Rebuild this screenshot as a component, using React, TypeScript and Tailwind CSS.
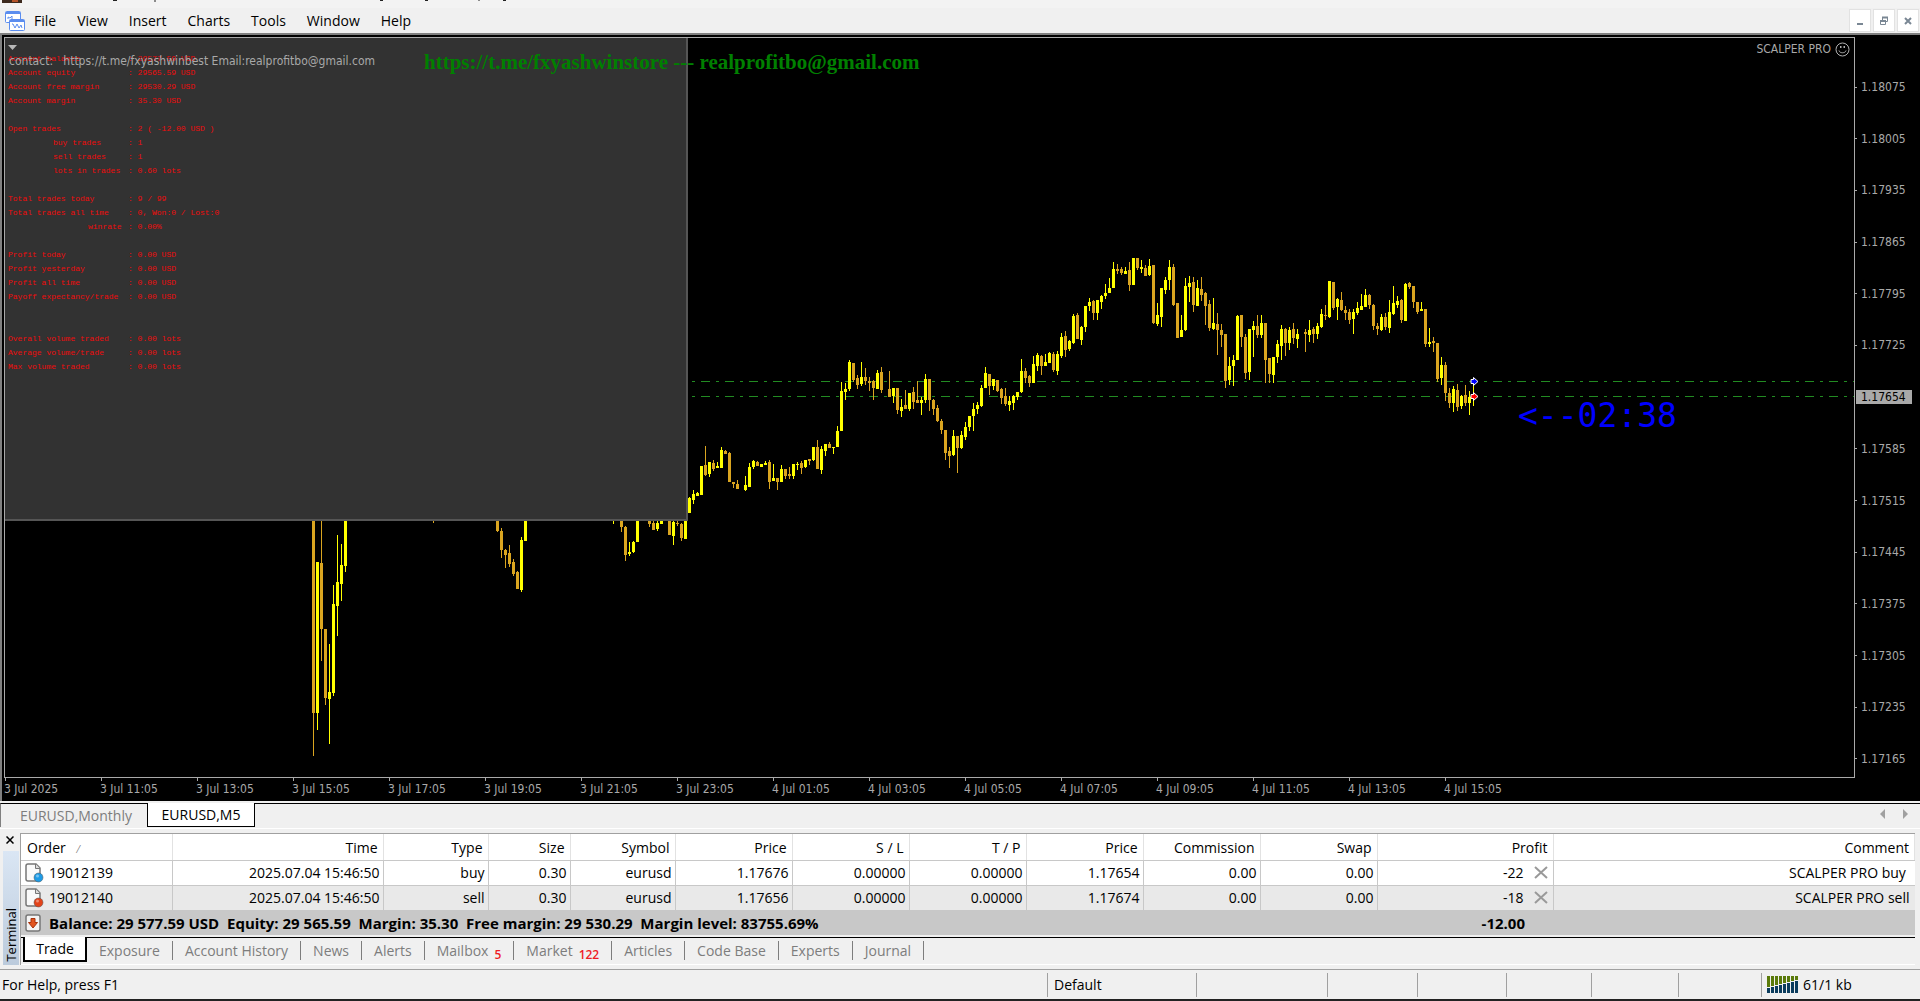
import type { ReactNode } from 'react';

// x, high, body top, body bottom, low, rising
type Candle = [number, number, number, number, number, number];

const candles: Candle[] = [
    [313, 500, 500, 713, 756, 0], [317, 562, 562, 713, 730, 1], [321, 500, 563, 629, 661, 0], [325, 629, 629, 698, 705, 0],
    [329, 644, 692, 699, 744, 1], [333, 585, 604, 693, 696, 1], [337, 535, 582, 606, 636, 1], [341, 544, 565, 584, 601, 1],
    [345, 500, 500, 566, 572, 1], [433, 500, 500, 501, 523, 0], [497, 500, 500, 531, 532, 0], [501, 528, 531, 550, 558, 0],
    [505, 549, 550, 555, 568, 0], [509, 545, 553, 564, 567, 0], [513, 559, 562, 574, 576, 0], [517, 571, 572, 589, 589, 0],
    [521, 537, 540, 590, 592, 1], [525, 500, 500, 541, 541, 1], [613, 500, 500, 501, 524, 1], [621, 500, 500, 527, 532, 0],
    [625, 526, 527, 555, 561, 0], [629, 542, 552, 554, 556, 1], [633, 541, 542, 552, 553, 1], [637, 500, 500, 542, 542, 1],
    [649, 500, 500, 524, 527, 0], [653, 520, 523, 530, 530, 0], [657, 520, 523, 529, 531, 1], [661, 500, 500, 524, 524, 1],
    [669, 500, 500, 535, 535, 0], [673, 521, 522, 536, 545, 1], [677, 520, 523, 524, 526, 0], [681, 523, 524, 538, 541, 0],
    [685, 500, 500, 539, 539, 1], [689, 497, 498, 513, 513, 1], [693, 490, 494, 500, 504, 1], [697, 492, 493, 496, 496, 1],
    [701, 466, 466, 495, 495, 1], [705, 446, 465, 475, 476, 0], [709, 462, 462, 474, 477, 1], [713, 460, 463, 469, 471, 0],
    [717, 462, 466, 468, 468, 1], [721, 447, 450, 468, 468, 1], [725, 450, 451, 454, 454, 0], [729, 452, 453, 482, 482, 0],
    [733, 482, 482, 484, 488, 0], [737, 480, 484, 489, 489, 0], [745, 476, 485, 490, 491, 1], [749, 463, 467, 487, 487, 1],
    [753, 460, 461, 467, 469, 1], [757, 461, 462, 466, 466, 0], [761, 464, 464, 467, 467, 1], [765, 461, 463, 465, 465, 1],
    [769, 460, 462, 482, 489, 0], [773, 464, 478, 481, 481, 1], [777, 478, 478, 482, 490, 0], [781, 465, 469, 482, 482, 1],
    [785, 469, 469, 476, 479, 0], [789, 467, 474, 476, 479, 0], [793, 464, 464, 476, 479, 1], [797, 462, 464, 465, 470, 1],
    [801, 461, 463, 468, 474, 0], [805, 460, 460, 467, 468, 1], [809, 459, 459, 461, 465, 0], [813, 447, 447, 460, 461, 1],
    [817, 440, 447, 469, 469, 0], [821, 446, 449, 470, 474, 1], [825, 444, 444, 451, 456, 1], [829, 442, 444, 448, 448, 0],
    [833, 447, 447, 448, 454, 1], [837, 426, 431, 447, 447, 1], [841, 382, 391, 431, 431, 1], [845, 383, 389, 392, 400, 1],
    [849, 360, 362, 389, 391, 1], [853, 363, 363, 380, 382, 0], [857, 375, 378, 385, 389, 0], [861, 362, 377, 384, 386, 1],
    [865, 368, 377, 381, 385, 0], [869, 377, 381, 383, 391, 0], [873, 380, 381, 388, 400, 0], [877, 370, 373, 389, 389, 1],
    [881, 367, 372, 390, 393, 0], [889, 371, 389, 397, 397, 0], [893, 388, 388, 396, 403, 1], [897, 388, 388, 410, 414, 0],
    [901, 399, 407, 411, 417, 1], [905, 390, 405, 409, 409, 0], [909, 393, 393, 409, 411, 1], [913, 387, 392, 402, 409, 0],
    [917, 381, 400, 403, 403, 0], [921, 397, 400, 403, 415, 1], [925, 374, 379, 400, 403, 1], [929, 379, 379, 400, 411, 0],
    [933, 399, 400, 409, 415, 0], [937, 405, 408, 421, 422, 0], [941, 419, 421, 430, 434, 0], [945, 430, 430, 453, 460, 0],
    [949, 447, 451, 456, 468, 0], [953, 430, 436, 455, 456, 1], [957, 436, 436, 448, 473, 0], [961, 431, 435, 448, 449, 1],
    [965, 422, 427, 437, 440, 1], [969, 416, 416, 427, 431, 1], [973, 403, 409, 416, 431, 1], [977, 402, 405, 409, 414, 1],
    [981, 385, 388, 406, 407, 1], [985, 367, 373, 388, 388, 1], [989, 374, 374, 386, 395, 0], [993, 379, 379, 386, 390, 1],
    [997, 380, 380, 391, 392, 0], [1001, 388, 389, 398, 404, 0], [1005, 388, 396, 404, 406, 0], [1009, 396, 401, 405, 411, 1],
    [1013, 395, 396, 403, 410, 1], [1017, 392, 392, 397, 400, 1], [1021, 359, 371, 392, 393, 1], [1025, 368, 371, 378, 383, 0],
    [1029, 375, 376, 383, 387, 0], [1033, 356, 364, 383, 383, 1], [1037, 353, 355, 366, 371, 1], [1041, 355, 356, 366, 375, 0],
    [1045, 354, 362, 366, 366, 1], [1049, 352, 353, 363, 363, 1], [1053, 352, 354, 370, 372, 0], [1057, 351, 354, 371, 375, 1],
    [1061, 333, 337, 356, 358, 1], [1065, 331, 336, 350, 357, 0], [1069, 340, 341, 349, 351, 1], [1073, 314, 316, 343, 344, 1],
    [1077, 313, 315, 339, 339, 0], [1081, 326, 327, 340, 345, 1], [1085, 306, 306, 327, 332, 1], [1089, 298, 302, 306, 311, 1],
    [1093, 300, 301, 313, 320, 0], [1097, 300, 300, 313, 320, 1], [1101, 295, 296, 302, 309, 1], [1105, 284, 293, 296, 299, 1],
    [1109, 278, 288, 293, 293, 1], [1113, 262, 269, 288, 288, 1], [1117, 264, 269, 271, 274, 0], [1121, 267, 269, 273, 275, 0],
    [1125, 267, 271, 274, 274, 1], [1129, 262, 270, 285, 291, 0], [1133, 258, 258, 285, 285, 1], [1137, 258, 258, 268, 270, 0],
    [1141, 260, 267, 269, 273, 1], [1145, 265, 268, 276, 276, 0], [1149, 259, 266, 275, 276, 1], [1153, 265, 265, 323, 324, 0],
    [1157, 303, 315, 324, 326, 1], [1161, 288, 288, 317, 327, 1], [1165, 277, 280, 290, 294, 1], [1169, 260, 267, 280, 290, 1],
    [1173, 264, 267, 305, 306, 0], [1177, 303, 303, 338, 338, 0], [1181, 315, 330, 337, 337, 1], [1185, 278, 286, 330, 331, 1],
    [1189, 276, 283, 287, 302, 1], [1193, 277, 282, 305, 312, 0], [1197, 280, 288, 306, 306, 1], [1201, 277, 289, 295, 301, 0],
    [1205, 292, 293, 306, 325, 0], [1209, 300, 304, 328, 331, 0], [1213, 298, 323, 329, 330, 1], [1217, 313, 324, 330, 355, 0],
    [1221, 324, 330, 335, 347, 0], [1225, 334, 334, 381, 388, 0], [1229, 357, 366, 380, 385, 1], [1233, 355, 360, 366, 386, 1],
    [1237, 315, 316, 360, 360, 1], [1241, 315, 315, 337, 347, 0], [1245, 334, 337, 373, 379, 0], [1249, 329, 329, 372, 380, 1],
    [1253, 321, 326, 330, 357, 1], [1257, 315, 326, 335, 338, 0], [1261, 315, 323, 335, 338, 1], [1265, 323, 323, 360, 383, 0],
    [1269, 358, 358, 374, 383, 0], [1273, 357, 357, 375, 383, 1], [1277, 340, 344, 357, 363, 1], [1281, 325, 329, 346, 360, 1],
    [1285, 328, 329, 343, 356, 0], [1289, 327, 330, 343, 350, 1], [1293, 323, 329, 338, 344, 0], [1297, 329, 334, 339, 348, 1],
    [1305, 329, 332, 334, 352, 0], [1309, 320, 330, 335, 342, 1], [1313, 327, 329, 334, 343, 0], [1317, 323, 326, 334, 339, 1],
    [1321, 309, 314, 327, 328, 1], [1325, 305, 315, 316, 320, 0], [1329, 281, 281, 317, 318, 1], [1333, 282, 282, 308, 310, 0],
    [1337, 298, 299, 307, 320, 1], [1341, 292, 300, 310, 311, 0], [1345, 306, 310, 313, 320, 0], [1349, 309, 312, 320, 324, 0],
    [1353, 309, 312, 319, 334, 1], [1357, 302, 308, 313, 315, 1], [1361, 294, 306, 310, 310, 1], [1365, 289, 295, 307, 307, 1],
    [1369, 294, 295, 305, 309, 0], [1373, 304, 305, 326, 330, 0], [1377, 323, 326, 329, 335, 0], [1381, 314, 317, 330, 331, 1],
    [1385, 313, 317, 327, 330, 0], [1389, 300, 312, 328, 333, 1], [1393, 286, 303, 314, 315, 1], [1397, 296, 301, 305, 308, 1],
    [1401, 299, 300, 320, 323, 0], [1405, 283, 284, 321, 321, 1], [1409, 282, 283, 287, 289, 0], [1413, 286, 286, 302, 308, 0],
    [1417, 302, 302, 312, 314, 0], [1421, 302, 309, 311, 311, 1], [1425, 309, 309, 344, 347, 0], [1429, 328, 342, 344, 347, 1],
    [1433, 337, 341, 343, 352, 0], [1437, 343, 343, 379, 382, 0], [1441, 357, 365, 378, 385, 1], [1445, 362, 365, 393, 401, 0],
    [1449, 388, 393, 403, 408, 0], [1453, 386, 389, 403, 412, 1], [1457, 384, 390, 407, 411, 0], [1461, 395, 396, 406, 409, 1],
    [1465, 385, 395, 403, 406, 0], [1469, 391, 397, 403, 415, 1], [1473, 382, 394, 397, 406, 1],
];

const menuItems = ['File', 'View', 'Insert', 'Charts', 'Tools', 'Window', 'Help'];

const prices = [
    '1.18075', '1.18005', '1.17935', '1.17865', '1.17795', '1.17725', '1.17654',
    '1.17585', '1.17515', '1.17445', '1.17375', '1.17305', '1.17235', '1.17165',
];

const times = [
    '3 Jul 2025', '3 Jul 11:05', '3 Jul 13:05', '3 Jul 15:05', '3 Jul 17:05', '3 Jul 19:05', '3 Jul 21:05', '3 Jul 23:05',
    '4 Jul 01:05', '4 Jul 03:05', '4 Jul 05:05', '4 Jul 07:05', '4 Jul 09:05', '4 Jul 11:05', '4 Jul 13:05', '4 Jul 15:05',
];

// label, value, label indent
const stats: [string, string, string][] = [
    ['Account balance', '29577.59 USD', ''],
    ['Account equity', '29565.59 USD', ''],
    ['Account free margin', '29530.29 USD', ''],
    ['Account margin', '35.30 USD', ''],
    ['', '', ''],
    ['Open trades', '2 ( -12.00 USD )', ''],
    ['buy trades', '1', 'pl-[45px]'],
    ['sell trades', '1', 'pl-[45px]'],
    ['lots in trades', '0.60 lots', 'pl-[45px]'],
    ['', '', ''],
    ['Total trades today', '9 / 99', ''],
    ['Total trades all time', '0, Won:0 / Lost:0', ''],
    ['winrate', '0.00%', 'pl-20'],
    ['', '', ''],
    ['Profit today', '0.00 USD', ''],
    ['Profit yesterday', '0.00 USD', ''],
    ['Profit all time', '0.00 USD', ''],
    ['Payoff expectancy/trade', '0.00 USD', ''],
    ['', '', ''],
    ['', '', ''],
    ['Overall volume traded', '0.00 lots', ''],
    ['Average volume/trade', '0.00 lots', ''],
    ['Max volume traded', '0.00 lots', ''],
];

const columns: [string, string][] = [
    ['Order', 'w-[151px]'], ['Time', 'w-[211px]'], ['Type', 'w-[105px]'], ['Size', 'w-[82px]'], ['Symbol', 'w-[105px]'],
    ['Price', 'w-[117px]'], ['S / L', 'w-[117px]'], ['T / P', 'w-[117px]'], ['Price', 'w-[117px]'],
    ['Commission', 'w-[117px]'], ['Swap', 'w-[117px]'], ['Profit', 'w-[176px]'], ['Comment', ''],
];

const orders = [
    {
        id: '19012139',
        dot: '#1e9be6',
        row: 'bg-white',
        cells: ['2025.07.04 15:46:50', 'buy', '0.30', 'eurusd', '1.17676', '0.00000', '0.00000', '1.17654', '0.00', '0.00'],
        profit: '-22',
        comment: 'SCALPER PRO buy ',
    },
    {
        id: '19012140',
        dot: '#e2431a',
        row: 'bg-[#e9e9e9]',
        cells: ['2025.07.04 15:46:50', 'sell', '0.30', 'eurusd', '1.17656', '0.00000', '0.00000', '1.17674', '0.00', '0.00'],
        profit: '-18',
        comment: 'SCALPER PRO sell',
    },
];

const tabs: [string, string][] = [
    ['Exposure', ''], ['Account History', ''], ['News', ''], ['Alerts', ''], ['Mailbox', '5'],
    ['Market', '122'], ['Articles', ''], ['Code Base', ''], ['Experts', ''], ['Journal', ''],
];

function WindowButton({ label, children }: { label: string; children: ReactNode }) {
    return (
        <button aria-label={label} className="flex h-[23px] w-[22px] items-center justify-center border border-[#e2e2e2] bg-white">
            <svg width="10" height="10" viewBox="0 0 10 10" fill="none" stroke="#7a8794" strokeWidth="2">
                {children}
            </svg>
        </button>
    );
}

function Marker({ x, y, color }: { x: number; y: number; color: string }) {
    return (
        <path
            transform={`translate(${x} ${y})`}
            d="M-2 -1.500H0.500V-3.500L5 0.500L0.500 4.500V2.500H-2Z"
            fill={color}
            stroke="#fff"
            shapeRendering="auto"
        />
    );
}

function MenuBar() {
    return (
        <header>
            <div className="h-2 bg-[#f3f3f3]">
                <svg width="520" height="3" className="block">
                    <rect x="2" width="20" height="3" fill="#3d2a1e" />
                    <rect x="12" width="6" height="2" fill="#b5542a" />
                    <path d="M113 0.500h4M155 0v2M380 0.500h3M425 0.500h3M479 0v1M503 0.500h3" stroke="#222" />
                </svg>
            </div>
            <div className="flex h-[25px] items-center justify-between bg-[#f0f0f0] pl-[5px] pr-px">
                <div className="flex items-center">
                    <svg width="20" height="20" viewBox="0 0 20 20" fill="#fff" stroke="#5b8def" strokeWidth="1">
                        <rect x="0.500" y="0.500" width="15" height="11" rx="1" />
                        <path d="M1 2h14" strokeWidth="2" />
                        <path d="M3 8V6l2 1 2-2v3" fill="none" />
                        <rect x="4.500" y="8.500" width="15" height="11" rx="1" />
                        <path d="M5 10h14" strokeWidth="2" />
                        <path d="M7 13h1l2 4 2-4 2 4 2-3 1 3" fill="none" />
                    </svg>
                    <nav className="flex gap-[21px] pl-[9px]">
                        {menuItems.map((item) => (
                            <button key={item}>{item}</button>
                        ))}
                    </nav>
                </div>
                <div className="flex gap-0.5">
                    <WindowButton label="Minimize">
                        <path d="M2 8h6" />
                    </WindowButton>
                    <WindowButton label="Restore">
                        <path d="M3.500 4V1.500h5v4H7M1.500 5h5v3.500h-5z" strokeWidth="1" />
                        <path d="M3 1.500h6M1 5h6" />
                    </WindowButton>
                    <WindowButton label="Close">
                        <path d="M2 2l6 6M8 2l-6 6" />
                    </WindowButton>
                </div>
            </div>
        </header>
    );
}

function Plot() {
    return (
        <div className="relative h-[741px] flex-1 overflow-hidden border border-[#a9a9a9]">
            <svg width="1849" height="739" viewBox="5 38 1849 739" className="block" shapeRendering="crispEdges">
                <path d="M692 381.500H1854M692 396.500H1854" stroke="#228b22" strokeDasharray="3 6 9 6" />
                {candles.map(([x, high, top, bottom, low, up]) => (
                    <g key={x} fill={up ? '#ffff00' : '#daa520'}>
                        <rect x={x} y={high} width="1" height={low - high} />
                        <rect x={x - 1} y={top} width="3" height={Math.max(bottom - top, 1)} />
                    </g>
                ))}
                <Marker x={1473} y={381} color="#0000ff" />
                <Marker x={1473} y={396} color="#ff0000" />
            </svg>

            {/* Expert advisor panel */}
            <div className="absolute left-0 top-0 h-[483px] w-[683px] border-b-2 border-r-2 border-[#555] bg-[#323232] pl-[3px] pt-3.5 font-['Liberation_Mono',monospace] text-[8px] leading-[14px] text-[#ee0c0c]">
                {stats.map(([label, value, indent], i) => (
                    <div key={i} className="flex h-3.5 whitespace-pre">
                        <span className={`w-[120px] ${indent}`}>{label}</span>
                        {label && <span>: {value}</span>}
                    </div>
                ))}
            </div>
            <p className="absolute left-1 top-[15px] text-xs leading-[16px] whitespace-pre">
                contact:   https://t.me/fxyashwinbest Email:realprofitbo@gmail.com
            </p>
            <p className="absolute left-[419px] top-[11px] whitespace-nowrap font-['Liberation_Serif',serif] text-[21px] font-bold leading-[26px] text-[#008000]">
                https://t.me/fxyashwinstore --- realprofitbo@gmail.com
            </p>
            <svg width="9" height="5" viewBox="0 0 9 5" className="absolute left-[3px] top-[7px]">
                <path d="M0 0h9L4.500 5z" fill="#b8b8b8" />
            </svg>
            <div className="absolute right-1 top-[3px] flex items-center gap-1 text-xs">
                SCALPER PRO
                <svg width="15" height="15" viewBox="0 0 15 15" fill="none" stroke="#b0b0b0">
                    <circle cx="7.500" cy="7.500" r="6.500" />
                    <path d="M4 8.500c.5 3 6.500 3 7 0" />
                    <path d="M5 5h1.500M8.500 5H10" strokeWidth="2" />
                </svg>
            </div>
            <p className="absolute left-[1513px] top-[358px] whitespace-nowrap font-['DejaVu_Sans_Mono',monospace] text-[33px] leading-[40px] text-[#0000ff]">
                &lt;--02:38
            </p>
        </div>
    );
}

function Chart() {
    return (
        <main className="border-l-2 border-t-2 border-[#808080] bg-black pl-0.5 pt-0.5 font-['DejaVu_Sans_Condensed','DejaVu_Sans',sans-serif] text-xs text-[#a9a9a9]">
            <div className="flex">
                <Plot />
                <ul className="flex h-[741px] w-[65px] flex-col justify-between pb-3 pt-[43px] leading-[14px]">
                    {prices.map((price) => (
                        <li key={price} className="flex items-center">
                            {price === '1.17654' ? (
                                <span className="ml-px w-14 bg-[#a9a9a9] pl-[5px] text-black">{price}</span>
                            ) : (
                                <>
                                    <span className="mr-1 h-px w-0.5 bg-[#a9a9a9]" />
                                    {price}
                                </>
                            )}
                        </li>
                    ))}
                </ul>
            </div>
            <ul className="flex h-[23px] overflow-hidden leading-[16px]">
                {times.map((time) => (
                    <li key={time} className="w-24 shrink-0 whitespace-nowrap">
                        <span className="ml-px block h-[3px] w-px bg-[#a9a9a9]" />
                        {time}
                    </li>
                ))}
            </ul>
        </main>
    );
}

function ChartTabs() {
    return (
        <div className="mt-0.5 flex h-[26px] items-start border-b border-white text-[#7d7d7d]">
            <button className="h-6 w-[147px] border-l border-t border-l-[#808080] border-t-black pl-1">EURUSD,Monthly</button>
            <button className="h-6 w-[108px] border-x border-b border-black bg-white text-black">EURUSD,M5</button>
            <div className="flex flex-1 justify-end gap-[18px] border-t border-black pr-3 pt-[5px]">
                <button aria-label="Scroll left">
                    <svg width="5" height="10"><path d="M5 0v10L0 5z" fill="#a0a0a0" /></svg>
                </button>
                <button aria-label="Scroll right">
                    <svg width="5" height="10"><path d="M0 0v10L5 5z" fill="#a0a0a0" /></svg>
                </button>
            </div>
        </div>
    );
}

function OrderIcon({ dot }: { dot: string }) {
    return (
        <svg width="19" height="20" viewBox="0 0 19 20">
            <path d="M1 3a2 2 0 0 1 2-2h8l4 4v11a2 2 0 0 1-2 2H3a2 2 0 0 1-2-2z" fill="#fafafa" stroke="#777" strokeWidth="1.500" />
            <path d="M10.500 1v4.500H15" fill="#ddd" stroke="#777" />
            <circle cx="13.500" cy="14.500" r="4.500" fill={dot} stroke="#555" strokeWidth="0.500" />
            <circle cx="12.500" cy="13" r="1.500" fill="#fff" opacity="0.400" />
        </svg>
    );
}

function OrdersTable() {
    return (
        <table className="w-full table-fixed border-collapse">
            <thead>
                <tr className="h-[26px] bg-white">
                    {columns.map(([name, width], i) => (
                        <th
                            key={i}
                            className={`${width} border-b border-r border-b-[#c8c8c8] border-r-[#e2e2e2] p-0 pt-[3px] font-normal ${i === 0 ? 'pl-1.5 text-left' : 'pr-[5px] text-right'}`}
                        >
                            {name}
                            {i === 0 && <span className="pl-3 text-[10px] text-[#777]">⁄</span>}
                        </th>
                    ))}
                </tr>
            </thead>
            <tbody>
                {orders.map((order) => (
                    <tr key={order.id} className={`h-[25px] border-b border-[#c8c8c8] ${order.row}`}>
                        <td className="border-r border-[#c8c8c8] p-0 pl-1">
                            <div className="flex items-center gap-[5px]">
                                <OrderIcon dot={order.dot} />
                                {order.id}
                            </div>
                        </td>
                        {order.cells.map((cell, i) => (
                            <td key={i} className="border-r border-[#c8c8c8] p-0 pr-[3px] text-right">{cell}</td>
                        ))}
                        <td className="border-r border-[#c8c8c8] p-0 pr-[5px]">
                            <div className="flex items-center justify-end gap-2.5">
                                {order.profit}
                                <button aria-label="Close order">
                                    <svg width="14" height="13" viewBox="0 0 14 13" stroke="#999" strokeWidth="2">
                                        <path d="M1 1l12 11M13 1L1 12" />
                                    </svg>
                                </button>
                            </div>
                        </td>
                        <td className="p-0 pr-[5px] text-right whitespace-pre">{order.comment}</td>
                    </tr>
                ))}
                <tr className="h-[25px] bg-[#c8c8c8] text-[15px] font-bold">
                    <td colSpan={11} className="p-0 pl-1">
                        <div className="flex items-center gap-2 whitespace-pre">
                            <svg width="16" height="18" viewBox="0 0 16 18">
                                <rect x="1" y="1" width="14" height="16" rx="2" fill="#f4f4f4" stroke="#777" strokeWidth="1.500" />
                                <path d="M6 4.500h4v4h2.500L8 14 3.500 8.500H6z" fill="#e2541f" stroke="#a8320c" />
                            </svg>
                            Balance: 29 577.59 USD  Equity: 29 565.59  Margin: 35.30  Free margin: 29 530.29  Margin level: 83755.69%
                        </div>
                    </td>
                    <td className="p-0 pr-7 text-right">-12.00</td>
                    <td />
                </tr>
            </tbody>
        </table>
    );
}

function Terminal() {
    return (
        <section className="mt-1 flex">
            <div className="flex w-5 flex-col">
                <button aria-label="Close terminal" className="mb-1 flex h-3.5 items-center pl-1.5">
                    <svg width="8" height="8" viewBox="0 0 8 8" stroke="#000" strokeWidth="1.500">
                        <path d="M0.500 0.500l7 7M7.500 0.500l-7 7" />
                    </svg>
                </button>
                <div className="ml-[3px] flex w-4 flex-1 items-end bg-linear-to-b from-[#dae6f4] to-[#bccbdc] pb-[3px]">
                    <span className="rotate-180 text-[13px] leading-4 [writing-mode:vertical-rl]">Terminal</span>
                </div>
            </div>
            <div className="mr-[5px] flex-1 border-l border-t border-[#a0a0a0]">
                <OrdersTable />
                <div className="mt-0.5 flex h-[28px] items-start border-b border-white text-[#7d7d7d]">
                    <span className="w-0.5 self-start border-t border-black" />
                    <button className="h-[25px] w-16 border-x-2 border-b-2 border-black bg-white text-black">Trade</button>
                    <div className="flex flex-1 border-t border-black pt-[3px]">
                        {tabs.map(([name, count]) => (
                            <button key={name} className="flex h-[19px] items-center border-r border-[#7d7d7d] px-3 leading-[18px]">
                                {name}
                                {count && <span className="pl-1.5 pt-2 text-xs font-semibold text-[#ee1c25]">{count}</span>}
                            </button>
                        ))}
                    </div>
                </div>
            </div>
        </section>
    );
}

function StatusBar() {
    const cell = 'h-6 border-l border-[#a0a0a0]';
    return (
        <footer className="mt-1 flex h-[32px] items-center border-b-2 border-t border-b-[#222] border-t-[#a0a0a0]">
            <span className="flex-1 pl-0.5">For Help, press F1</span>
            <span className={`${cell} w-[149px] pl-1.5 leading-[24px]`}>Default</span>
            <span className={`${cell} w-[131px]`} />
            <span className={`${cell} w-[90px]`} />
            <span className={`${cell} w-[89px]`} />
            <span className={`${cell} w-[85px]`} />
            <span className={`${cell} w-[87px]`} />
            <span className={`${cell} w-[83px]`} />
            <div className={`${cell} flex w-[159px] items-center gap-1 pl-[5px]`}>
                <svg width="32" height="17" viewBox="0 0 32 17" shapeRendering="crispEdges">
                    {Array.from({ length: 8 }, (_, i) => (
                        <g key={i}>
                            <rect x={i * 4} y="0" width="3" height={11 - i} fill="#5a7a0a" />
                            <rect x={i * 4} y={12 - i} width="3" height={5 + i} fill="#0b3c5d" />
                        </g>
                    ))}
                </svg>
                61/1 kb
            </div>
        </footer>
    );
}

export default function App() {
    return (
        <div className="bg-[#f0f0f0] font-['Open_Sans',sans-serif] text-sm leading-5 text-black">
            <MenuBar />
            <Chart />
            <ChartTabs />
            <Terminal />
            <StatusBar />
        </div>
    );
}
